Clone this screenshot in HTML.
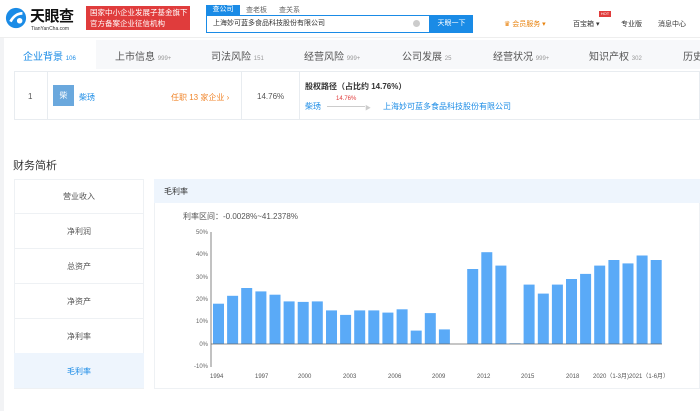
<!DOCTYPE html><html><head><meta charset="utf-8"><style>
*{margin:0;padding:0;box-sizing:border-box}
body{width:700px;height:411px;overflow:hidden;background:#fff;font-family:"Liberation Sans","Noto Sans CJK SC",sans-serif;position:relative;color:#333}
.a{position:absolute;white-space:nowrap}
</style></head><body>
<div class="a" style="left:0;top:0;width:700px;height:38px;background:#fff;border-bottom:1px solid #eee"></div>
<svg class="a" style="left:5px;top:7px" width="22" height="22" viewBox="0 0 24 24"><circle cx="12" cy="12" r="11" fill="#1a8be6"/><path d="M6 16c3-6 8-9 13-9" stroke="#fff" stroke-width="3" fill="none"/><circle cx="16" cy="15" r="3" fill="#fff"/></svg>
<div class="a" style="left:30px;top:5px;font-size:15px;font-weight:bold;color:#111;letter-spacing:-0.5px">天眼查</div>
<div class="a" style="left:31px;top:26px;font-size:5px;color:#333">TianYanCha.com</div>
<div class="a" style="left:86px;top:6px;width:104px;height:24px;background:#e03c3c;color:#fff;font-size:7.5px;line-height:11px;padding:1px 4px">国家中小企业发展子基金旗下<br>官方备案企业征信机构</div>
<div class="a" style="left:206px;top:5px;width:34px;height:10px;background:#1a8be6;color:#fff;font-size:7px;line-height:10px;text-align:center">查公司</div>
<div class="a" style="left:246px;top:5px;font-size:7px;color:#666">查老板</div>
<div class="a" style="left:279px;top:5px;font-size:7px;color:#666">查关系</div>
<div class="a" style="left:206px;top:15px;width:224px;height:18px;border:1px solid #1a8be6;font-size:7px;line-height:16px;padding-left:6px;color:#333;background:#fff">上海妙可蓝多食品科技股份有限公司</div>
<div class="a" style="left:413px;top:20px;width:7px;height:7px;border-radius:50%;background:#ccc"></div>
<div class="a" style="left:430px;top:15px;width:43px;height:18px;background:#1a8be6;color:#fff;font-size:7px;line-height:18px;text-align:center">天眼一下</div>
<div class="a" style="left:504px;top:19px;font-size:7px;color:#e8830f">♛ 会员服务 ▾</div>
<div class="a" style="left:599px;top:11px;width:12px;height:6px;background:#e03c3c;color:#fff;font-size:4px;text-align:center;line-height:6px">HOT</div>
<div class="a" style="left:573px;top:19px;font-size:7px;color:#333">百宝箱 ▾</div>
<div class="a" style="left:621px;top:19px;font-size:7px;color:#333">专业版</div>
<div class="a" style="left:658px;top:19px;font-size:7px;color:#333">消息中心</div>
<div class="a" style="left:0;top:38px;width:4px;height:373px;background:#f2f3f5"></div>
<div class="a" style="left:5px;top:40px;width:695px;height:29px;background:#f7f8fa"></div>
<div class="a" style="left:5px;top:40px;width:91px;height:29px;background:#fff"></div>
<div class="a" style="left:23px;top:48px;font-size:10px;color:#1a8be6">企业背景 <span style="font-size:6px">106</span></div>
<div class="a" style="left:115px;top:48px;font-size:10px;color:#555">上市信息 <span style="font-size:6px;color:#999">999+</span></div>
<div class="a" style="left:211px;top:48px;font-size:10px;color:#555">司法风险 <span style="font-size:6px;color:#999">151</span></div>
<div class="a" style="left:304px;top:48px;font-size:10px;color:#555">经营风险 <span style="font-size:6px;color:#999">999+</span></div>
<div class="a" style="left:402px;top:48px;font-size:10px;color:#555">公司发展 <span style="font-size:6px;color:#999">25</span></div>
<div class="a" style="left:493px;top:48px;font-size:10px;color:#555">经营状况 <span style="font-size:6px;color:#999">999+</span></div>
<div class="a" style="left:589px;top:48px;font-size:10px;color:#555">知识产权 <span style="font-size:6px;color:#999">302</span></div>
<div class="a" style="left:683px;top:48px;font-size:10px;color:#555">历史</div>
<div class="a" style="left:14px;top:71px;width:686px;height:49px;border:1px solid #e8ecf0"></div>
<div class="a" style="left:47px;top:71px;width:1px;height:49px;background:#e8ecf0"></div>
<div class="a" style="left:241px;top:71px;width:1px;height:49px;background:#e8ecf0"></div>
<div class="a" style="left:299px;top:71px;width:1px;height:49px;background:#e8ecf0"></div>
<div class="a" style="left:28px;top:92px;font-size:8px;color:#555">1</div>
<div class="a" style="left:53px;top:85px;width:21px;height:21px;background:#6aa8dd;color:#fff;font-size:8px;text-align:center;line-height:21px">柴</div>
<div class="a" style="left:79px;top:92px;font-size:8px;color:#1a8be6">柴琇</div>
<div class="a" style="left:171px;top:92px;font-size:8px;color:#f0862c">任职 13 家企业 ›</div>
<div class="a" style="left:257px;top:92px;font-size:8px;color:#555">14.76%</div>
<div class="a" style="left:305px;top:81px;font-size:8px;color:#333;font-weight:bold">股权路径（占比约 14.76%）</div>
<div class="a" style="left:305px;top:101px;font-size:8px;color:#1a8be6">柴琇</div>
<div class="a" style="left:336px;top:96px;font-size:6px;color:#e03c3c">14.76%</div>
<div class="a" style="left:327px;top:106px;width:38px;height:1px;background:#ccc"></div>
<div class="a" style="left:365px;top:103px;font-size:6px;color:#ccc">▶</div>
<div class="a" style="left:383px;top:101px;font-size:8px;color:#1a8be6">上海妙可蓝多食品科技股份有限公司</div>
<div class="a" style="left:13px;top:157px;font-size:11px;color:#333">财务简析</div>
<div class="a" style="left:14px;top:179px;width:130px;height:210px;background:#fff;border:1px solid #eef1f4"></div>
<div class="a" style="left:14px;top:353px;width:130px;height:35px;background:#eef5fd"></div>
<div class="a" style="left:14px;top:213px;width:130px;height:1px;background:#eef1f4"></div>
<div class="a" style="left:14px;top:248px;width:130px;height:1px;background:#eef1f4"></div>
<div class="a" style="left:14px;top:283px;width:130px;height:1px;background:#eef1f4"></div>
<div class="a" style="left:14px;top:318px;width:130px;height:1px;background:#eef1f4"></div>
<div class="a" style="left:14px;top:191px;width:130px;text-align:center;font-size:8px;color:#555">营业收入</div>
<div class="a" style="left:14px;top:226px;width:130px;text-align:center;font-size:8px;color:#555">净利润</div>
<div class="a" style="left:14px;top:261px;width:130px;text-align:center;font-size:8px;color:#555">总资产</div>
<div class="a" style="left:14px;top:296px;width:130px;text-align:center;font-size:8px;color:#555">净资产</div>
<div class="a" style="left:14px;top:331px;width:130px;text-align:center;font-size:8px;color:#555">净利率</div>
<div class="a" style="left:14px;top:366px;width:130px;text-align:center;font-size:8px;color:#1a8be6">毛利率</div>
<div class="a" style="left:154px;top:179px;width:546px;height:210px;border:1px solid #eef1f4"></div>
<div class="a" style="left:154px;top:179px;width:546px;height:24px;background:#eef5fd"></div>
<div class="a" style="left:164px;top:186px;font-size:8px;color:#333">毛利率</div>
<div class="a" style="left:183px;top:211px;font-size:8px;color:#555">利率区间：-0.0028%~41.2378%</div>
<svg class="a" style="left:0;top:0" width="700" height="411">
<g font-size="6" fill="#666" text-anchor="end" font-family="Liberation Sans,sans-serif">
<text x="208" y="234">50%</text><text x="208" y="256">40%</text><text x="208" y="279">30%</text><text x="208" y="301">20%</text><text x="208" y="323">10%</text><text x="208" y="346">0%</text><text x="208" y="368">-10%</text></g>
<line x1="211" y1="232" x2="211" y2="367" stroke="#666" stroke-width="0.8"/>
<g fill="#5aaaf7" id="b"></g>
<line x1="211" y1="344" x2="662" y2="344" stroke="#666" stroke-width="0.8"/>
<g font-size="6" fill="#555" font-family="Liberation Sans,sans-serif">
<text x="210" y="378">1994</text><text x="255" y="378">1997</text><text x="298" y="378">2000</text><text x="343" y="378">2003</text><text x="388" y="378">2006</text><text x="432" y="378">2009</text><text x="477" y="378">2012</text><text x="521" y="378">2015</text><text x="566" y="378">2018</text><text x="593" y="378">2020（1-3月)2021（1-6月）</text></g>
</svg>
<script>
var v=[18,21.5,25,23.5,22,19,18.8,19,15,13,15,15,14,15.5,6,13.8,6.5,0,33.5,41,35,0.3,26.5,22.5,26.5,29,31.3,35,37.5,36,39.5,37.5];
var g=document.getElementById('b'),s='';
v.forEach(function(d,i){if(!d)return;var h=d*2.24;s+='<rect x="'+(213+i*14.12).toFixed(1)+'" y="'+(344-h).toFixed(1)+'" width="11" height="'+h.toFixed(1)+'"/>';});
g.innerHTML=s;
</script>
</body></html>
